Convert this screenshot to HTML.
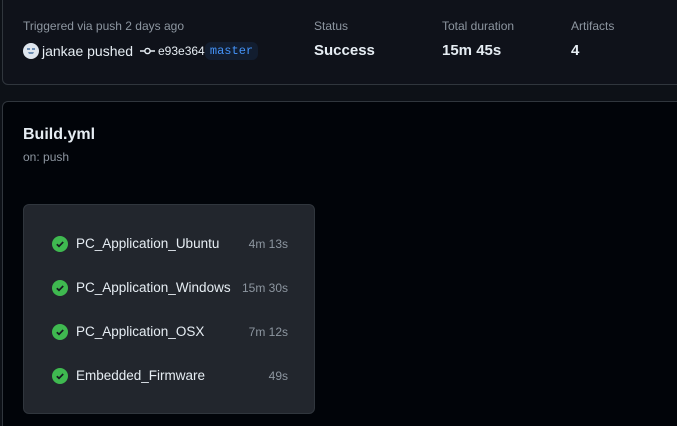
<!DOCTYPE html>
<html><head><meta charset="utf-8"><style>
*{box-sizing:border-box;margin:0;padding:0}
html,body{width:677px;height:426px;overflow:hidden}
body{background:#0d1117;font-family:"Liberation Sans",sans-serif;color:#e6edf3;position:relative}
.top{position:absolute;left:2px;top:-10px;width:690px;height:95px;background:#0f121a;border:1px solid #30363d;border-radius:6px}
.lbl{position:absolute;top:19px;font-size:12px;color:#8d96a0}
.val{position:absolute;top:42px;font-size:15px;font-weight:bold;color:#e6edf3}
.main{position:absolute;left:2px;top:101px;width:690px;height:340px;background:#010409;border:1px solid #30363d;border-radius:6px}
.jobs{position:absolute;left:23px;top:204px;width:292px;height:210px;background:#22262d;border:1px solid #30363d;border-radius:6px}
.job{position:absolute;left:28px;font-size:13.5px;color:#e6edf3;width:236px}
.job svg{position:absolute;left:0;top:0}
.job .n{position:absolute;left:24px;top:0}
.job .t{position:absolute;right:0;top:1px;font-size:12px;color:#8d96a0}
</style></head><body>
<div class="top"></div>
<div class="lbl" style="left:23px">Triggered via push 2 days ago</div>
<svg style="position:absolute;left:23px;top:43px" width="16" height="16" viewBox="0 0 16 16"><circle cx="8" cy="8" r="8" fill="#dfe6ee"/><path d="M4 5h3v2H4zM9 5h3v2H9zM5 9h6l-1 2H6z" fill="#6f8fb4"/></svg>
<div style="position:absolute;left:42px;top:43px;font-size:14px">jankae pushed</div>
<svg style="position:absolute;left:140px;top:45px" width="15" height="12" viewBox="0 0 15 12"><circle cx="7.5" cy="6" r="2.6" fill="none" stroke="#e6edf3" stroke-width="1.4"/><path d="M0 6h4.5M10.5 6H15" stroke="#e6edf3" stroke-width="1.4"/></svg>
<div style="position:absolute;left:158px;top:44px;font-size:12px">e93e364</div>
<div style="position:absolute;left:205px;top:42px;width:53px;height:18px;background:#121d2f;border-radius:6px;color:#4493f8;font-family:'Liberation Mono',monospace;font-size:12px;line-height:18px;text-align:center">master</div>
<div class="lbl" style="left:314px">Status</div><div class="val" style="left:314px">Success</div>
<div class="lbl" style="left:442px">Total duration</div><div class="val" style="left:442px">15m 45s</div>
<div class="lbl" style="left:571px">Artifacts</div><div class="val" style="left:571px">4</div>
<div class="main"></div>
<div style="position:absolute;left:23px;top:126px;font-size:16px;font-weight:bold">Build.yml</div>
<div style="position:absolute;left:23px;top:150px;font-size:12px;color:#8d96a0">on: push</div>
<div class="jobs">
<div class="job" style="top:31px"><svg width="16" height="16" viewBox="0 0 16 16"><circle cx="8" cy="8" r="8" fill="#3fb950"/><path d="M4.8 8.2l2.2 2.1 4.2-4.3" fill="none" stroke="#161b22" stroke-width="1.7"/></svg><span class="n">PC_Application_Ubuntu</span><span class="t">4m 13s</span></div>
<div class="job" style="top:75px"><svg width="16" height="16" viewBox="0 0 16 16"><circle cx="8" cy="8" r="8" fill="#3fb950"/><path d="M4.8 8.2l2.2 2.1 4.2-4.3" fill="none" stroke="#161b22" stroke-width="1.7"/></svg><span class="n">PC_Application_Windows</span><span class="t">15m 30s</span></div>
<div class="job" style="top:119px"><svg width="16" height="16" viewBox="0 0 16 16"><circle cx="8" cy="8" r="8" fill="#3fb950"/><path d="M4.8 8.2l2.2 2.1 4.2-4.3" fill="none" stroke="#161b22" stroke-width="1.7"/></svg><span class="n">PC_Application_OSX</span><span class="t">7m 12s</span></div>
<div class="job" style="top:163px"><svg width="16" height="16" viewBox="0 0 16 16"><circle cx="8" cy="8" r="8" fill="#3fb950"/><path d="M4.8 8.2l2.2 2.1 4.2-4.3" fill="none" stroke="#161b22" stroke-width="1.7"/></svg><span class="n">Embedded_Firmware</span><span class="t">49s</span></div>
</div>
</body></html>
